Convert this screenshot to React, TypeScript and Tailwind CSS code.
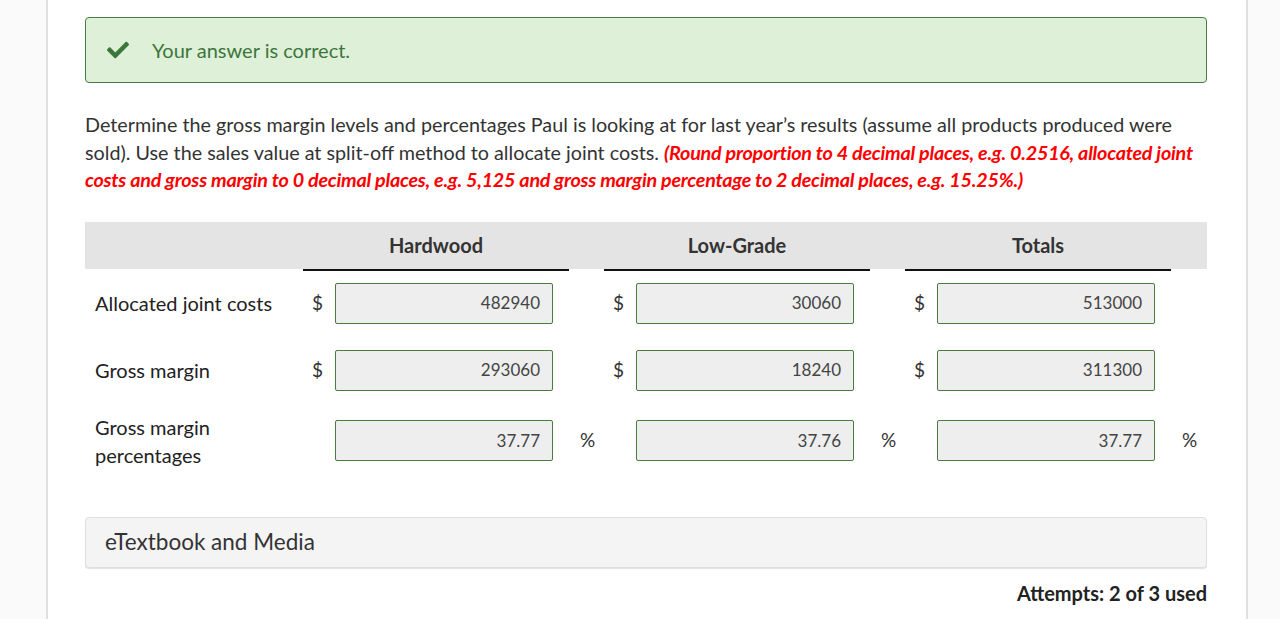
import { FaCheck } from 'react-icons/fa';

type Row = {
  label: string[];
  values: string[];
  unit: '$' | '%';
};

const rows: Row[] = [
  { label: ['Allocated joint costs'], values: ['482940', '30060', '513000'], unit: '$' },
  { label: ['Gross margin'], values: ['293060', '18240', '311300'], unit: '$' },
  { label: ['Gross margin', 'percentages'], values: ['37.77', '37.76', '37.77'], unit: '%' },
];

const columns = ['Hardwood', 'Low-Grade', 'Totals'];

function ValueBox({ value }: { value: string }) {
  return (
    <div className="flex h-[41px] w-[218px] items-center justify-end rounded-[2px] border border-[#4b7b40] bg-[#eeeeee] pr-[12px] text-[17px] text-[#444]">
      {value}
    </div>
  );
}

export default function App() {
  return (
    <div className="flex min-h-[619px] bg-white font-['Lato','Noto_Sans',sans-serif] text-[#333]">
      <div className="w-[48px] shrink-0 border-r-2 border-[#e0e0e0] bg-[#fafafa]" />

      <main className="w-[1198px] shrink-0 pl-[37px] pr-[39px] pt-[17px]">
        {/* Feedback */}
        <div className="flex h-[66px] items-center rounded-[4px] border border-[#4a7c43] bg-[#dff0d8] pl-[21px] text-[#3c763d]">
          <FaCheck className="h-[22px] w-[22px] text-[#3b763a]" />
          <span className="ml-[23px] text-[20px]">Your answer is correct.</span>
        </div>

        {/* Question */}
        <p className="mt-[28px] text-[19.75px] leading-[27.5px] text-[#333]">
          Determine the gross margin levels and percentages Paul is looking at for last year’s results (assume all products produced were
          sold). Use the sales value at split-off method to allocate joint costs.{' '}
          <span className="font-bold italic tracking-[-0.25px] text-[#ff0000]">
            (Round proportion to 4 decimal places, e.g. 0.2516, allocated joint costs and gross margin to 0 decimal places, e.g. 5,125 and gross margin percentage to 2 decimal places, e.g. 15.25%.)
          </span>
        </p>

        {/* Table */}
        <div className="mt-[28px]">
          <div className="flex h-[47px] items-center bg-[#e4e4e4]">
            <div className="w-[218px]" />
            {columns.map((c) => (
              <div key={c} className="w-[301px]">
                <div className="w-[266px] text-center text-[20px] font-bold text-[#333]">{c}</div>
              </div>
            ))}
          </div>
          <div className="flex h-[2px]">
            <div className="w-[218px]" />
            {columns.map((c) => (
              <div key={c} className="w-[301px]">
                <div className="h-[2px] w-[266px] bg-[#111]" />
              </div>
            ))}
          </div>

          {rows.map((r, i) => (
            <div
              key={i}
              className={
                'flex items-center ' +
                (i === 0 ? 'mt-[12px]' : i === 1 ? 'mt-[26px]' : 'mt-[22px]')
              }
            >
              <div className="w-[218px] pl-[10px] text-[20px] leading-[28px] text-[#222]">
                {r.label.map((l) => (
                  <div key={l}>{l}</div>
                ))}
              </div>
              {r.values.map((v, j) => (
                <div key={j} className="flex w-[301px] items-center">
                  <div className="w-[32px] pl-[9px] text-[19px] text-[#333]">{r.unit === '$' ? '$' : ''}</div>
                  <ValueBox value={v} />
                  {r.unit === '%' && <span className="ml-[27px] text-[19px] text-[#333]">%</span>}
                </div>
              ))}
            </div>
          ))}
        </div>

        {/* Media */}
        <div className="mt-[48px] flex h-[51px] items-center rounded-[4px] border border-[#e0e0e0] bg-[#f4f4f4] pl-[19px] text-[22.5px] text-[#333] shadow-[0_1px_1px_rgba(0,0,0,0.12)]">
          eTextbook and Media
        </div>

        <div className="mt-[13px] text-right text-[20px] font-bold leading-[25px] text-[#222]">
          Attempts: 2 of 3 used
        </div>
      </main>

      <div className="flex-1 border-l-2 border-[#e0e0e0] bg-[#fafafa]" />
    </div>
  );
}
